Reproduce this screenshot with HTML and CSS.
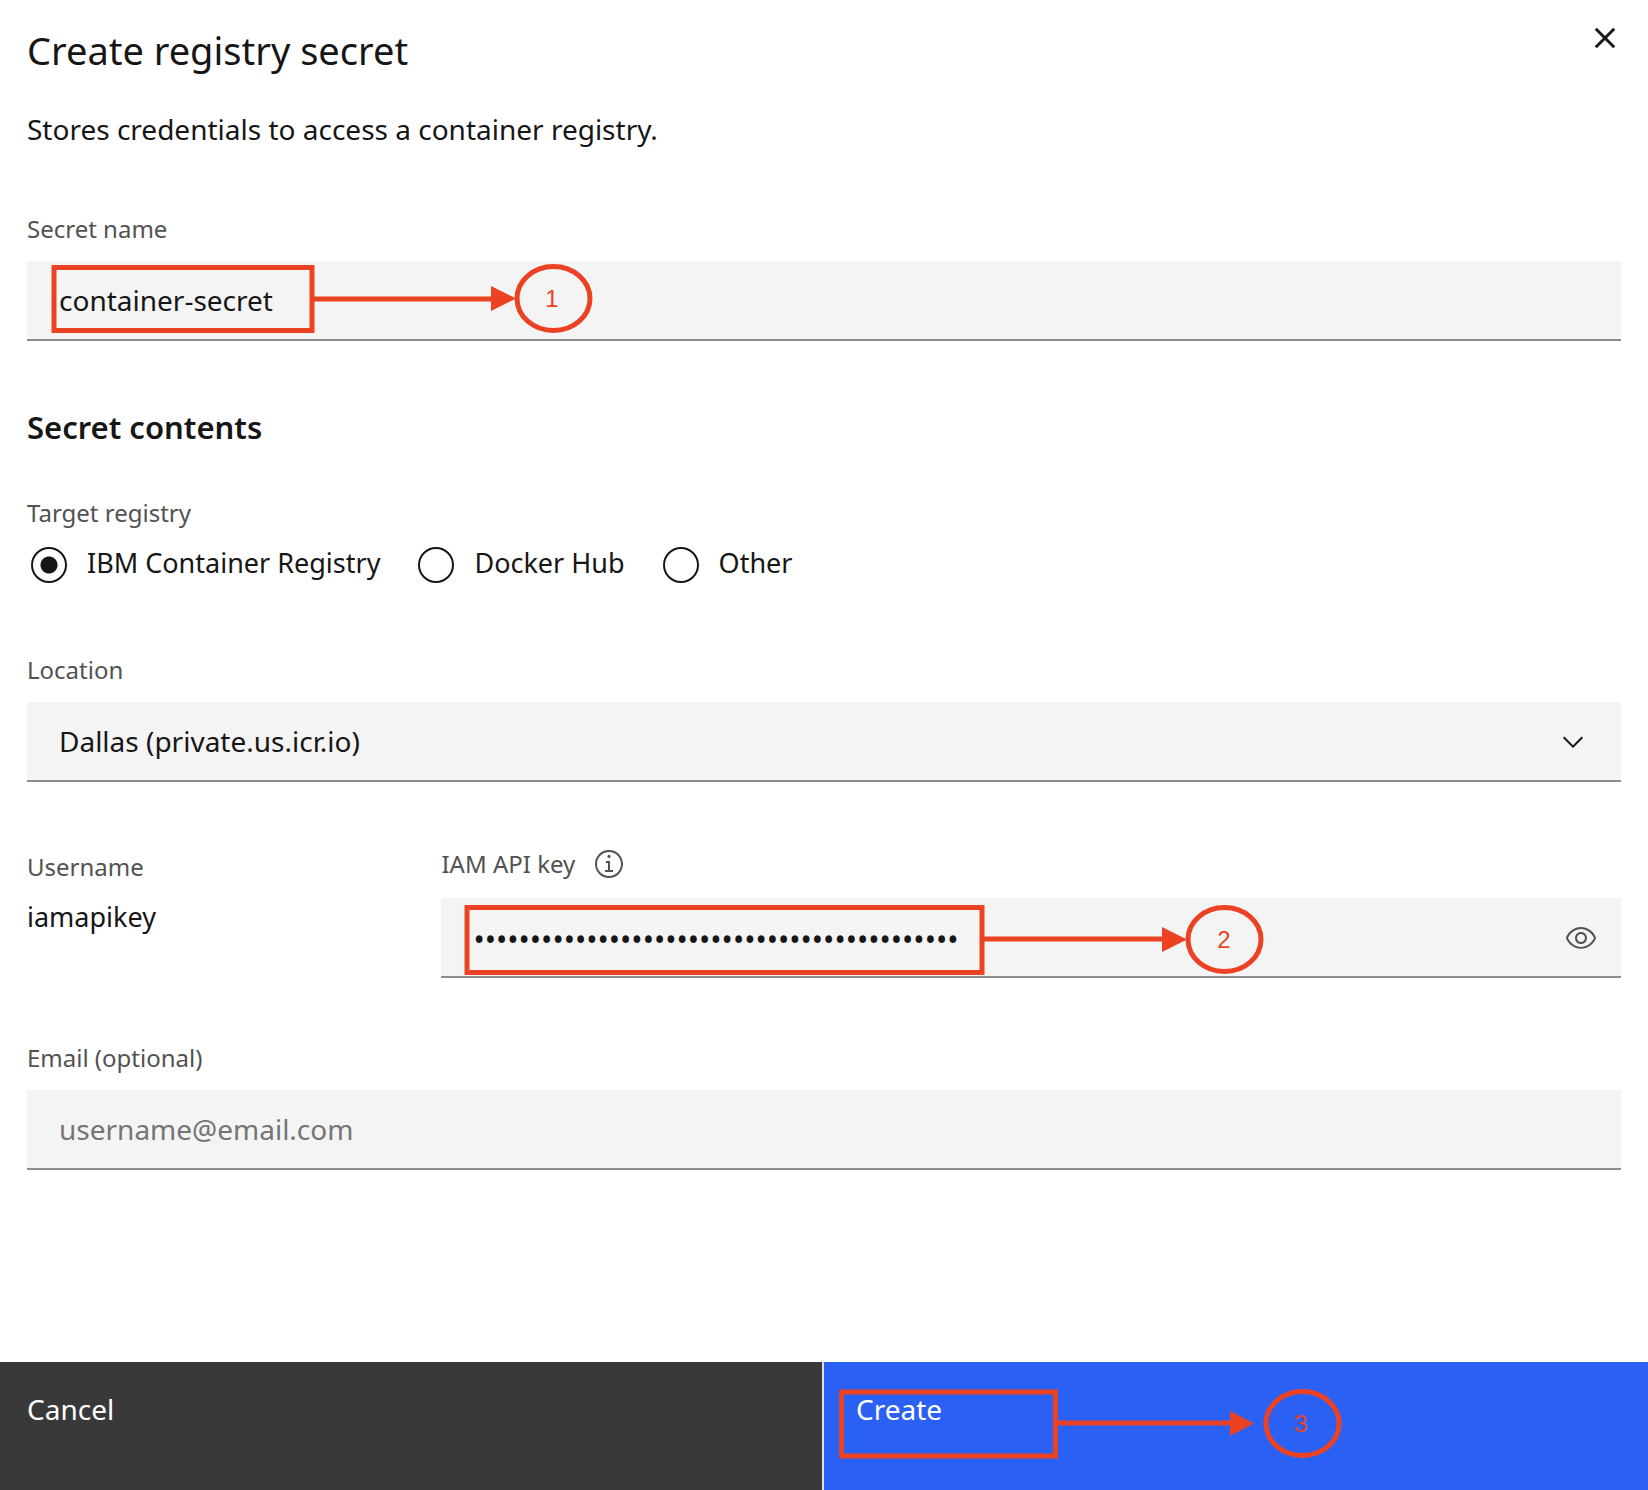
FILE: index.html
```html
<!DOCTYPE html>
<html lang="en">
<head>
<meta charset="utf-8">
<meta name="viewport" content="width=device-width, initial-scale=1">
<title>Create registry secret</title>
<link rel="stylesheet" href="styles.css">
</head>
<body>
<form class="panel">
  <main class="content">
    <header class="header">
      <h1 class="title">Create registry secret</h1>
      <button class="icon-button close" type="button" aria-label="Close">
        <svg width="40" height="40" viewBox="0 0 32 32" fill="currentColor" stroke="currentColor" stroke-width="0.4" aria-hidden="true"><path d="M17.4141 16 24 9.4141 22.5859 8 16 14.5859 9.4143 8 8 9.4141 14.5859 16 8 22.5859 9.4143 24 16 17.4141 22.5859 24 24 22.5859z"/></svg>
      </button>
    </header>
    <p class="description">Stores credentials to access a container registry.</p>

    <div class="group">
      <label class="label" for="secret-name">Secret name</label>
      <div class="field">
        <input class="control" id="secret-name" type="text" value="container-secret">
        <svg class="callout" aria-hidden="true">
          <rect x="27" y="6.5" width="258" height="63"/>
          <path d="M286 38H466"/>
          <path class="callout-head" d="M464 25L489 37.5L464 50z"/>
          <ellipse cx="526.5" cy="37.5" rx="36.5" ry="32"/>
          <text x="525" y="46">1</text>
        </svg>
      </div>
    </div>

    <h2 class="heading">Secret contents</h2>

    <fieldset class="registry">
      <legend class="label">Target registry</legend>
      <div class="options">
        <label class="option"><input class="radio" type="radio" name="registry" checked>IBM Container Registry</label>
        <label class="option"><input class="radio" type="radio" name="registry">Docker Hub</label>
        <label class="option"><input class="radio" type="radio" name="registry">Other</label>
      </div>
    </fieldset>

    <div class="group">
      <label class="label" for="location">Location</label>
      <div class="field">
        <select class="control" id="location"><option>Dallas (private.us.icr.io)</option></select>
        <svg class="chevron" width="32" height="32" viewBox="0 0 16 16" fill="currentColor" aria-hidden="true"><path d="M8 11L3 6 3.7 5.3 8 9.6 12.3 5.3 13 6z"/></svg>
      </div>
    </div>

    <div class="group credentials">
      <div class="username">
        <span class="label">Username</span>
        <span class="value">iamapikey</span>
      </div>
      <div>
        <div class="label-row">
          <label class="label" for="api-key">IAM API key</label>
          <button class="icon-button info" type="button" aria-label="About the API key">
            <svg width="32" height="32" viewBox="0 0 16 16" fill="currentColor" aria-hidden="true"><path d="M8.5 11L8.5 6.5 6.5 6.5 6.5 7.5 7.5 7.5 7.5 11 6 11 6 12 10 12 10 11zM8 3.5c-.4 0-.8.3-.8.8S7.6 5 8 5c.4 0 .8-.3.8-.8S8.4 3.5 8 3.5z"/><path d="M8,15c-3.9,0-7-3.1-7-7s3.1-7,7-7s7,3.1,7,7S11.9,15,8,15z M8,2C4.7,2,2,4.7,2,8s2.7,6,6,6s6-2.7,6-6S11.3,2,8,2z"/></svg>
          </button>
        </div>
        <div class="field">
          <input class="control password" id="api-key" type="password" value="0000000000000000000000000000000000000000000">
          <button class="icon-button reveal" type="button" aria-label="Show API key">
            <svg width="32" height="32" viewBox="0 0 16 16" fill="currentColor" aria-hidden="true"><path d="M15.5,7.8C14.3,4.7,11.3,2.6,8,2.5C4.7,2.6,1.7,4.7,0.5,7.8c0,0.1,0,0.2,0,0.3c1.2,3.1,4.1,5.2,7.5,5.3c3.3-0.1,6.3-2.2,7.5-5.3C15.5,8.1,15.5,7.9,15.5,7.8z M8,12.5c-2.7,0-5.4-2-6.5-4.5c1-2.5,3.8-4.5,6.5-4.5s5.4,2,6.5,4.5C13.4,10.5,10.6,12.5,8,12.5z"/><path d="M8,5C6.3,5,5,6.3,5,8s1.3,3,3,3s3-1.3,3-3S9.7,5,8,5z M8,10c-1.1,0-2-0.9-2-2s0.9-2,2-2s2,0.9,2,2S9.1,10,8,10z"/></svg>
          </button>
          <svg class="callout" aria-hidden="true">
            <rect x="26" y="9.5" width="515" height="65"/>
            <path d="M542 41H723"/>
            <path class="callout-head" d="M721 29L746 41.5L721 54z"/>
            <ellipse cx="783.5" cy="41.5" rx="36.5" ry="32"/>
            <text x="783" y="50">2</text>
          </svg>
        </div>
      </div>
    </div>

    <div class="group">
      <label class="label" for="email">Email (optional)</label>
      <div class="field">
        <input class="control" id="email" type="email" placeholder="username@email.com">
      </div>
    </div>
  </main>

  <footer class="actions">
    <button class="action cancel" type="button">Cancel</button>
    <div class="primary">
      <button class="action create" type="submit">Create</button>
      <svg class="callout" aria-hidden="true">
        <rect x="17.5" y="30" width="214" height="64"/>
        <path d="M229 61H408"/>
        <path class="callout-head" d="M406 49L430 61.5L406 74z"/>
        <ellipse cx="478.5" cy="61.5" rx="36.5" ry="32"/>
        <text x="477" y="70">3</text>
      </svg>
    </div>
  </footer>
</form>
</body>
</html>
```
FILE: styles.css
```css
* {
  box-sizing: border-box;
}

body {
  margin: 0;
  background: #fff;
  color: #161616;
  font: 28px/40px "Noto Sans", sans-serif;
}

button,
input,
select {
  font: inherit;
  color: inherit;
}

.panel {
  display: flex;
  flex-direction: column;
  min-height: 100vh;
}

.content {
  flex: 1;
  padding: 18px 27px 64px;
}

.header {
  display: flex;
  justify-content: space-between;
  align-items: flex-start;
}

.title {
  margin: 8px 0 0;
  font-size: 38px;
  line-height: 48px;
  font-weight: 400;
}

.icon-button {
  display: block;
  padding: 0;
  border: 0;
  background: none;
}

.icon-button svg {
  display: block;
}

.close {
  margin-right: -4px;
}

.description {
  margin: 35px 0 0;
}

.group {
  margin-top: 64px;
}

.label {
  display: block;
  padding: 0;
  color: #525252;
  font-size: 24px;
  line-height: 32px;
}

.field {
  position: relative;
  margin-top: 16px;
}

.control {
  display: block;
  width: 100%;
  height: 80px;
  padding: 0 32px;
  border: 0;
  border-bottom: 2px solid #8d8d8d;
  border-radius: 0;
  background: #f4f4f4;
  appearance: none;
}

.control::placeholder {
  color: #757575;
  opacity: 1;
}

.password {
  padding-top: 4px;
  font-size: 30px;
}

.heading {
  margin: 66px 0 0;
  font-size: 31px;
  line-height: 40px;
  font-weight: 600;
}

.registry {
  margin: 50px 0 0;
  padding: 0;
  border: 0;
}

.options {
  display: flex;
  flex-wrap: wrap;
  gap: 38px;
  margin-top: 13px;
  font-size: 27px;
  line-height: 42px;
}

.option {
  display: flex;
  gap: 20px;
}

.radio {
  flex: none;
  width: 36px;
  height: 36px;
  margin: 5px 0 0;
  border: 2px solid #161616;
  border-radius: 50%;
  background: #fff;
  appearance: none;
}

.radio:checked {
  background: radial-gradient(circle, #161616 8px, #fff 9px);
}

.options .option:first-child {
  margin-left: 4px;
}

.registry + .group {
  margin-top: 70px;
}

.chevron {
  position: absolute;
  top: 24px;
  right: 32px;
  pointer-events: none;
}

.credentials {
  display: grid;
  grid-template-columns: 26% 1fr;
}

.username {
  padding-top: 5px;
}

.value {
  display: block;
  margin-top: 13px;
  font-size: 27px;
  line-height: 42px;
}

.label-row {
  display: flex;
  align-items: center;
  gap: 18px;
  padding: 2px 0;
}

.info {
  color: #525252;
}

.reveal {
  position: absolute;
  top: 24px;
  right: 24px;
  color: #525252;
}

.callout {
  position: absolute;
  top: 0;
  left: 0;
  width: 100%;
  height: 100%;
  overflow: visible;
  pointer-events: none;
  fill: none;
  stroke: #ec4224;
  stroke-width: 5px;
}

.callout-head,
.callout text {
  fill: #ec4224;
  stroke: none;
}

.callout text {
  font: 24px "Liberation Sans", sans-serif;
  text-anchor: middle;
}

.actions {
  display: grid;
  grid-template-columns: calc(50% - 2px) 1fr;
  gap: 2px;
  background: #e0e0e0;
}

.primary {
  position: relative;
}

.action {
  display: flex;
  align-items: flex-start;
  width: 100%;
  height: 128px;
  padding: 27px;
  border: 0;
  color: #fff;
  text-align: left;
}

.cancel {
  background: #393939;
}

.create {
  padding-left: 32px;
  background: #2b60f5;
}
```
